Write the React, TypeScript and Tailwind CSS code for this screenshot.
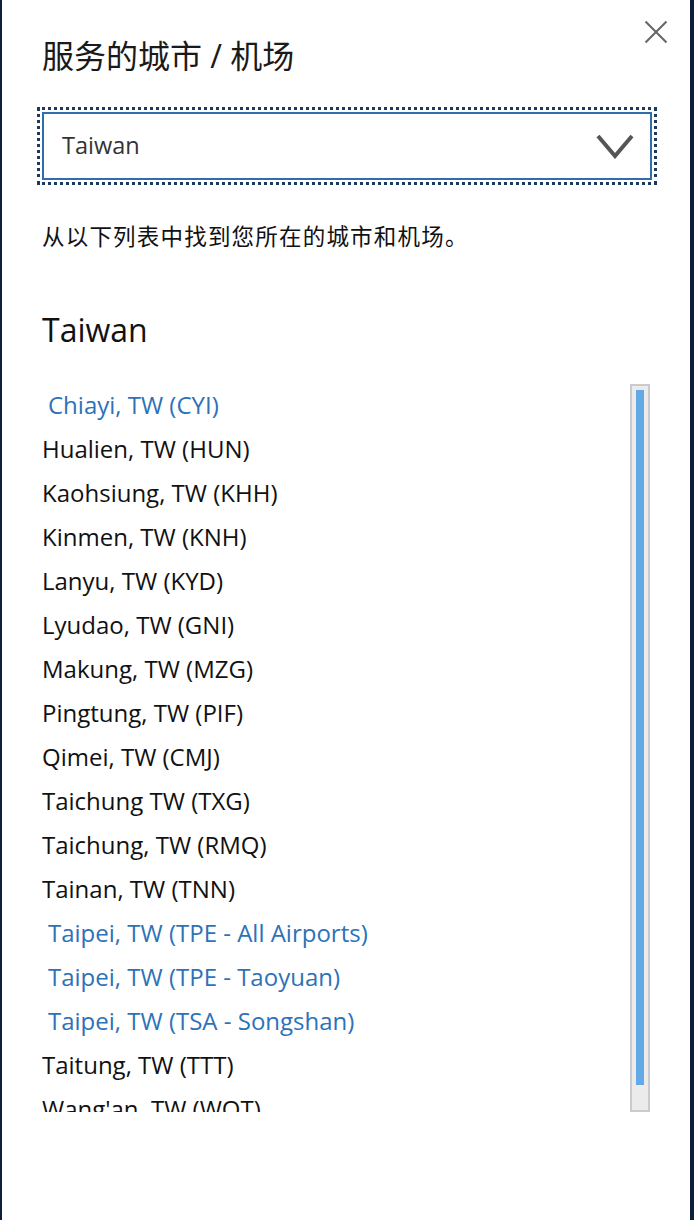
import React from 'react';

type Airport = { label: string; active?: boolean };

const airports: Airport[] = [
  { label: 'Chiayi, TW (CYI)', active: true },
  { label: 'Hualien, TW (HUN)' },
  { label: 'Kaohsiung, TW (KHH)' },
  { label: 'Kinmen, TW (KNH)' },
  { label: 'Lanyu, TW (KYD)' },
  { label: 'Lyudao, TW (GNI)' },
  { label: 'Makung, TW (MZG)' },
  { label: 'Pingtung, TW (PIF)' },
  { label: 'Qimei, TW (CMJ)' },
  { label: 'Taichung TW (TXG)' },
  { label: 'Taichung, TW (RMQ)' },
  { label: 'Tainan, TW (TNN)' },
  { label: 'Taipei, TW (TPE - All Airports)', active: true },
  { label: 'Taipei, TW (TPE - Taoyuan)', active: true },
  { label: 'Taipei, TW (TSA - Songshan)', active: true },
  { label: 'Taitung, TW (TTT)' },
  { label: "Wang'an, TW (WOT)" },
];

const font = { fontFamily: '"Open Sans", "Noto Sans CJK SC", sans-serif' };

const App: React.FC = () => {
  return (
    <div className="min-h-[1220px] bg-white border-l-2 border-r-4 border-[#0e2039] relative" style={font}>
      <button className="absolute top-[20px] right-[22px] w-[24px] h-[24px] text-[#666]" aria-label="Close">
        <svg viewBox="0 0 24 24" className="w-full h-full" fill="none" stroke="currentColor" strokeWidth="2">
          <path d="M1.5 1.5 L22.5 22.5 M22.5 1.5 L1.5 22.5" />
        </svg>
      </button>

      <div className="pl-[40px] pr-[38px] pt-[35px]">
        <h1 className="text-[32px] leading-[42px] text-[#1a1a1a] font-normal">服务的城市 / 机场</h1>

        <div className="mt-[35px] outline-[3px] outline-dotted outline-[#1b3b5e] outline-offset-[2px]">
          <div className="h-[68px] border-2 border-[#2f6ea8] flex items-center justify-between pl-[18px] pr-[16px]">
            <span className="text-[23.5px] text-[#333]">Taiwan</span>
            <svg viewBox="0 0 38 26" className="w-[38px] h-[26px]" fill="none" stroke="#555" strokeWidth="4">
              <path d="M2 3 L19 23 L36 3" />
            </svg>
          </div>
        </div>

        <p className="mt-[42px] text-[22.5px] leading-[30px] tracking-[1.2px] text-[#111]">从以下列表中找到您所在的城市和机场。</p>

        <h2 className="mt-[57px] text-[32px] leading-[42px] text-[#111]">Taiwan</h2>

        <div className="mt-[32px] flex h-[729px]">
          <ul className="flex-1 overflow-hidden">
            {airports.map((a) => (
              <li
                key={a.label}
                className={`h-[44px] leading-[44px] text-[24px] whitespace-nowrap ${
                  a.active ? 'text-[#2d72b8] pl-[6px]' : 'text-[#111]'
                }`}
              >
                {a.label}
              </li>
            ))}
          </ul>
          <div className="w-[20px] mr-[2px] h-[728px] mt-[1px] border-2 border-[#cbcbcb] bg-[#ebebeb] px-[4px] pt-[4px]">
            <div className="w-full h-[695px] bg-[#63a9e6]" />
          </div>
        </div>
      </div>
    </div>
  );
};

export default App;
